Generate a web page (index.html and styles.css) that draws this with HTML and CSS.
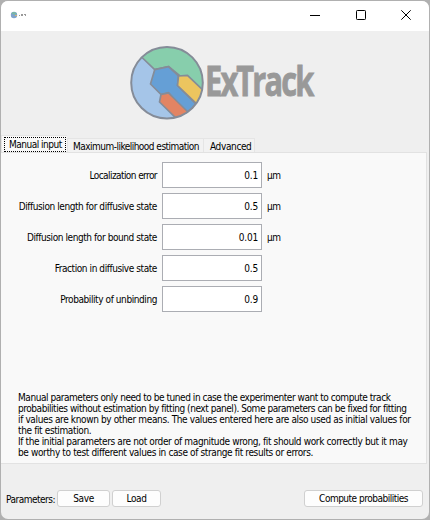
FILE: index.html
```html
<!DOCTYPE html>
<html lang="en">
<head>
<meta charset="utf-8">
<title>ExTrack</title>
<link rel="stylesheet" href="styles.css">
</head>
<body>
<div class="window">
  <header class="titlebar">
    <svg class="app-icon" width="16" height="8" viewBox="0 0 16 8">
      <circle cx="4" cy="4" r="3.2" fill="#7fa3cc"/>
      <path d="M1.500 2.500Q4 -.5 7 3L4 3.500Z" fill="#78b9a0"/>
      <path d="M5 4h2v1H5z" fill="#d9b66d"/>
      <path d="M9 4h1v1H9zM11 3h2v2h-2zM14 3h2v1h-2zM15 4h1v1h-1z" fill="#999"/>
    </svg>
    <div class="controls">
      <svg width="10" height="10" viewBox="0 0 10 10"><path d="M0 5.5H10" stroke="#000"/></svg>
      <svg width="10" height="10" viewBox="0 0 10 10"><rect x=".5" y=".5" width="9" height="9" rx=".8" fill="none" stroke="#000"/></svg>
      <svg width="10" height="10" viewBox="0 0 10 10"><path d="M.3 .3L9.7 9.7M9.7 .3L.3 9.7" stroke="#000"/></svg>
    </div>
  </header>
  <div class="brand">
    <svg width="190" height="76" viewBox="129 45 190 76">
      <defs><clipPath id="disc"><circle cx="167" cy="82.7" r="36"/></clipPath></defs>
      <g clip-path="url(#disc)" stroke="#858c98" stroke-width="1.7" stroke-linejoin="round">
        <rect x="129" y="45" width="78" height="78" fill="#a5c5e8"/>
        <path d="M141 56.500L154.700 69.700L168.500 66.500L180 76L205 99L215 40H140Z" fill="#87ceac"/>
        <path d="M154.700 69.700L168.500 66.700L178.500 76L177.500 85.500L207 115L190 118L168.500 92.500L161 94.500L150.500 84Z" fill="#659fd6"/>
        <path d="M178.500 76L187.500 75.300L206 93L203 110L177.500 85.500Z" fill="#ecc55f"/>
        <path d="M161 94.500L168.500 93L190 114L184 126L159.500 102Z" fill="#e28463"/>
      </g>
      <circle cx="167" cy="82.700" r="35.800" fill="none" stroke="#858c98" stroke-width="2"/>
      <text class="wordmark" x="205" y="95.500" textLength="107.500" lengthAdjust="spacingAndGlyphs">ExTrack</text>
    </svg>
  </div>
  <nav class="tabs">
    <div class="tab active"><span class="focus">Manual input</span></div>
    <div class="tab likelihood">Maximum-likelihood estimation</div>
    <div class="tab advanced">Advanced</div>
  </nav>
  <main class="panel">
    <div class="form">
      <label class="tight">Localization error</label><div class="field">0.1</div><span>µm</span>
      <label>Diffusion length for diffusive state</label><div class="field">0.5</div><span>µm</span>
      <label>Diffusion length for bound state</label><div class="field">0.01</div><span>µm</span>
      <label>Fraction in diffusive state</label><div class="field">0.5</div><span></span>
      <label>Probability of unbinding</label><div class="field">0.9</div><span></span>
    </div>
    <p class="help"><span class="snug">Manual parameters only need to be tuned in case the experimenter want to compute track<br>probabilities without estimation by fitting (next panel). Some parameters can be fixed for fitting</span><br>if values are known by other means. The values entered here are also used as initial values for<br>the fit estimation.<br>If the initial parameters are not order of magnitude wrong, fit should work correctly but it may<br>be worthy to test different values in case of strange fit results or errors.</p>
  </main>
  <footer class="actions">
    <span class="caption">Parameters:</span>
    <div class="button save">Save</div>
    <div class="button load">Load</div>
    <div class="button compute">Compute probabilities</div>
  </footer>
</div>
</body>
</html>
```

FILE: styles.css
```css
* { box-sizing: border-box; }
body {
  margin: 0;
  width: 430px;
  height: 520px;
  overflow: hidden;
  background: #b0b0b0;
  color: #000;
  font-family: "DejaVu Sans Condensed", "DejaVu Sans", sans-serif;
  font-stretch: condensed;
  font-size: 10px;
  line-height: 11px;
  letter-spacing: -0.37px;
  white-space: nowrap;
}
.window {
  width: 428px;
  height: 518px;
  margin: 1px;
  border-radius: 7px;
  overflow: hidden;
  background: #efefef;
  display: flex;
  flex-direction: column;
}
.titlebar {
  height: 30px;
  background: #fff;
  display: flex;
  align-items: center;
  justify-content: space-between;
  padding: 0 18px 2px 9px;
}
.controls { display: flex; gap: 35.5px; }
.controls svg { display: block; }
.brand { height: 106px; padding: 14px 0 0 128px; }
.brand svg { display: block; overflow: visible; }
.wordmark {
  font: bold 42px "Open Sans", "Noto Sans", sans-serif;
  letter-spacing: -2.5px;
  fill: #999;
  stroke: #999;
  stroke-width: 0.9px;
}
.tabs {
  height: 15px;
  display: flex;
  align-items: flex-end;
}
.tab {
  height: 14px;
  background: #f2f2f2;
  border: 1px solid #e5e5e5;
  border-bottom: 0;
  padding: 2px 0 0 5px;
}
.active {
  width: 66px;
  height: 17px;
  padding: 1px 0 0 2px;
  background: #f9f9f9;
  border-right: 0;
}
.focus {
  display: block;
  width: 62px;
  height: 15px;
  padding: 1px 0 0 4px;
  border: 1px dotted #000;
  letter-spacing: -0.5px;
}
.likelihood { width: 137px; letter-spacing: -0.52px; }
.advanced { width: 51px; border-left: 0; padding-left: 6px; }
.panel {
  height: 312px;
  width: 426px;
  background: #f9f9f9;
  border: 1px solid #e2e2e2;
  border-left: 0;
  padding: 9px 0 0 17px;
  display: flex;
  flex-direction: column;
  justify-content: space-between;
}
.form {
  display: grid;
  grid-template-columns: 139px 100px 30px;
  grid-auto-rows: 26px;
  gap: 5px;
  align-items: center;
}
.form label { text-align: right; letter-spacing: -0.42px; }
.form .tight { letter-spacing: -0.58px; }
.field {
  height: 26px;
  border: 1px solid #abadb3;
  background: #fff;
  text-align: right;
  padding: 7px 3px 0 0;
  letter-spacing: -0.2px;
}
.help { margin: 0 0 5px; }
.snug { letter-spacing: -0.45px; }
.actions {
  height: 55px;
  padding: 26px 6px 0 5px;
  display: flex;
  align-items: flex-start;
}
.caption { width: 51px; padding-top: 4px; letter-spacing: -0.5px; }
.button {
  height: 17px;
  background: #fdfdfd;
  border: 1px solid #d0d0d0;
  border-radius: 3px;
  text-align: center;
  padding-top: 2px;
}
.save { width: 53px; margin-right: 2px; }
.load { width: 49px; }
.compute { width: 119px; margin-left: auto; letter-spacing: -0.5px; }
```
